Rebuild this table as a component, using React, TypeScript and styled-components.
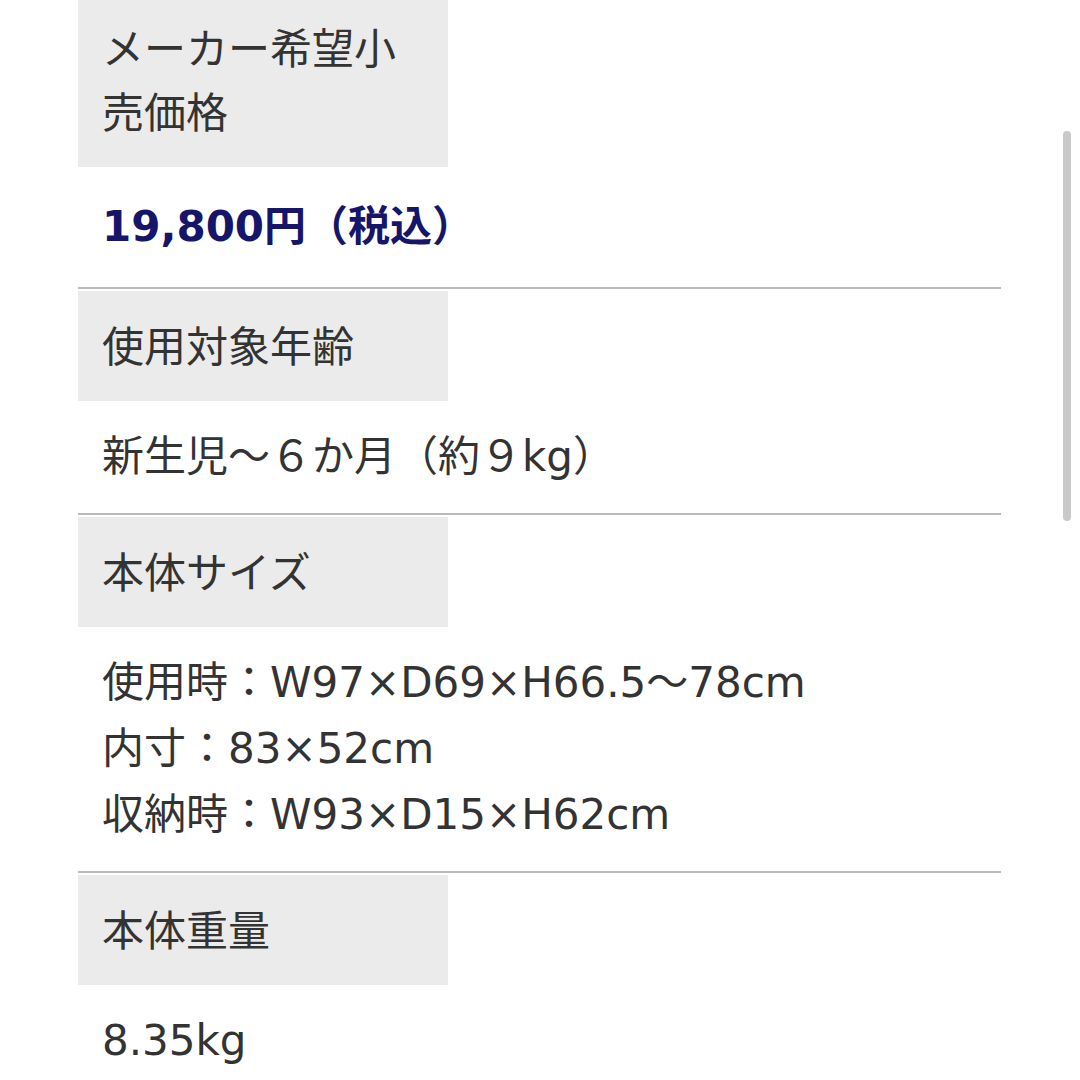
import styled, { createGlobalStyle } from "styled-components";

const GlobalStyle = createGlobalStyle`
    html, body {
        margin: 0;
        padding: 0;
        background: #ffffff;
        overflow: hidden;
    }
    body {
        font-family: "DejaVu Sans", "Noto Sans CJK JP", sans-serif;
        color: #333333;
    }
`;

type Spec = {
    label: string;
    values: string[];
    isPrice?: boolean;
};

const specList: Spec[] = [
    { label: 'メーカー希望小売価格', values: ['19,800円（税込）'], isPrice: true },
    { label: '使用対象年齢', values: ['新生児～６か月（約９kg）'] },
    { label: '本体サイズ', values: ['使用時：W97×D69×H66.5～78cm', '内寸：83×52cm', '収納時：W93×D15×H62cm'] },
    { label: '本体重量', values: ['8.35kg'] },
];

const App = () => {
    return (
        <Page>
            <GlobalStyle />
            <SpecList>
                {specList.map((spec, i) => (
                    <SpecRow key={i} isLast={i === specList.length - 1}>
                        <SpecLabel>{spec.label}</SpecLabel>
                        <SpecValue isPrice={!!spec.isPrice}>
                            {spec.values.map((str, j) => <ValueLine key={j}>{str}</ValueLine>)}
                        </SpecValue>
                    </SpecRow>
                ))}
            </SpecList>
            <ScrollThumb />
        </Page>
    );
}

export default App;


const Page = styled.div`
    position: relative;
    width: 1080px;
    height: 1080px;
    overflow: hidden;
`;

const SpecList = styled.div`
    display: flex;
    flex-direction: column;
    width: 923px;
    margin: -7px 0 0 78px;
`;

const SpecRow = styled.div<{
    isLast: boolean;
}>`
    display: flex;
    flex-direction: column;
    border-bottom: ${props => props.isLast ? 'none' : '2px solid #bababa'};
    margin: 0 0 2px 0;
`;

const SpecLabel = styled.div`
    width: 370px;
    box-sizing: border-box;
    padding: 21px 24px 25px 24px;
    background-color: #ebebeb;
    font-family: "Noto Sans CJK JP", sans-serif;
    font-size: 42px;
    line-height: 64px;
    color: #333333;
`;

const SpecValue = styled.div<{
    isPrice: boolean;
}>`
    display: flex;
    flex-direction: column;
    padding: ${props => props.isPrice ? '27px 24px 27px 24px' : '23px 24px 23px 24px'};
    font-size: 42px;
    line-height: 66px;
    font-weight: ${props => props.isPrice ? 700 : 400};
    color: ${props => props.isPrice ? '#15156a' : '#333333'};
`;

const ValueLine = styled.div`
    white-space: nowrap;
`;

const ScrollThumb = styled.div`
    position: absolute;
    top: 131px;
    right: 9px;
    width: 8px;
    height: 390px;
    border-radius: 4px;
    background-color: #c9c9c9;
`;
